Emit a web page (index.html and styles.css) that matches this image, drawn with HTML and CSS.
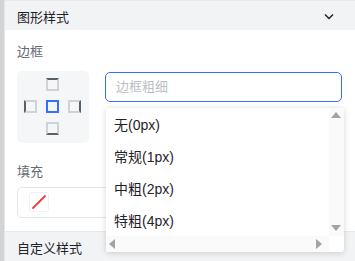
FILE: index.html
```html
<!DOCTYPE html>
<html lang="zh">
<head>
    <meta charset="UTF-8">
    <title>图形样式</title>
    <link rel="stylesheet" href="styles.css">
</head>
<body>
    <div class="strip"></div>
    <div class="panel">
        <div class="section-head">
            <span>图形样式</span>
            <svg class="chevron" width="10" height="7" viewBox="0 0 10 7"><path d="M1 1.5 L5 5.5 L9 1.5" fill="none" stroke="#1f2329" stroke-width="1.5"/></svg>
        </div>
        <div class="section-body">
            <div class="label">边框</div>
            <div class="border-row">
                <div class="picker">
                    <span></span><span class="sq top"></span><span></span>
                    <span class="sq left"></span><span class="sq center"></span><span class="sq right"></span>
                    <span></span><span class="sq bottom"></span><span></span>
                </div>
                <div class="input">边框粗细</div>
            </div>
            <div class="label fill-label">填充</div>
            <div class="fill-box">
                <div class="swatch">
                    <svg width="20" height="20" viewBox="0 0 20 20"><line x1="4" y1="16" x2="16" y2="4" stroke="#f03e3e" stroke-width="1.8" stroke-linecap="round"/></svg>
                </div>
            </div>
        </div>
        <div class="section-head bottom-head">
            <span>自定义样式</span>
            <svg class="chevron" width="10" height="7" viewBox="0 0 10 7"><path d="M1 1.5 L5 5.5 L9 1.5" fill="none" stroke="#1f2329" stroke-width="1.5"/></svg>
        </div>
    </div>

    <div class="dropdown">
        <div class="list">
            <div class="item">无(0px)</div>
            <div class="item">常规(1px)</div>
            <div class="item">中粗(2px)</div>
            <div class="item">特粗(4px)</div>
        </div>
        <div class="vscroll">
            <span class="arrow up"></span>
            <span class="arrow down"></span>
        </div>
        <div class="hscroll">
            <span class="arrow lt"></span>
            <span class="arrow rt"></span>
        </div>
    </div>
</body>
</html>
```

FILE: styles.css
```css
body{
    margin: 0;
    width: 355px;
    height: 261px;
    overflow: hidden;
    display: flex;
    font-family: "Liberation Sans", "Noto Sans CJK SC", sans-serif;
    background: #fff;
}
.strip{
    width: 4px;
    background: #d3d4d6;
    border-right: 1px solid #e6e7e9;
}
.panel{
    flex: 1;
    display: flex;
    flex-direction: column;
}
.section-head{
    height: 30px;
    box-sizing: border-box;
    background: #f2f3f5;
    border-top: 1px solid #e8e9eb;
    display: flex;
    align-items: center;
    justify-content: space-between;
    padding: 2px 21px 0 12px;
    font-size: 13px;
    color: #1f2329;
}
.section-body{
    padding: 0 13px 0 12px;
    height: 201px;
    box-sizing: border-box;
}
.label{
    font-size: 13px;
    color: #646a73;
    line-height: 18px;
    margin-top: 13px;
}
.border-row{
    display: flex;
    align-items: flex-start;
    gap: 16px;
    margin-top: 10px;
}
.picker{
    width: 72px;
    height: 72px;
    box-sizing: border-box;
    padding: 7px 8px 8px 7px;
    background: #f5f6f7;
    border-radius: 5px;
    display: grid;
    grid-template-columns: repeat(3, 13px);
    grid-template-rows: repeat(3, 13px);
    gap: 9px;
}
.sq{
    border: 2px solid #d0d3d6;
    box-sizing: border-box;
    width: 13px;
    height: 13px;
}
.sq.top{ border-top-color: #5c5f66; }
.sq.left{ border-left-color: #5c5f66; }
.sq.right{ border-right-color: #5c5f66; }
.sq.bottom{ border-bottom-color: #5c5f66; }
.sq.center{ border-color: #3370ff; }
.input{
    flex: 1;
    height: 30px;
    box-sizing: border-box;
    margin-top: 1px;
    border: 1px solid #3370ff;
    border-radius: 5px;
    padding: 0 10px;
    line-height: 28px;
    font-size: 13px;
    color: #bbbfc4;
}
.fill-label{
    margin-top: 20px;
}
.fill-box{
    margin-top: 6px;
    height: 31px;
    box-sizing: border-box;
    border: 1px solid #e4e5e7;
    border-radius: 5px;
    padding: 4px 11px;
}
.swatch{
    width: 20px;
    height: 20px;
    box-sizing: border-box;
    border: 1px solid #eef0f2;
    border-radius: 3px;
    display: flex;
}
.swatch svg{
    margin: -1px;
}
.bottom-head{
    flex: 1;
    align-items: center;
}

/* open dropdown list */
.dropdown{
    position: absolute;
    left: 106px;
    top: 108px;
    width: 238px;
    height: 144px;
    background: #fff;
    border-radius: 3px;
    box-shadow: 0 1px 6px rgba(0,0,0,0.16);
}
.list{
    padding-top: 1px;
}
.item{
    height: 32px;
    line-height: 32px;
    padding-left: 8px;
    font-size: 14px;
    color: #1f2329;
}
.vscroll{
    position: absolute;
    right: 0;
    top: 0;
    width: 15px;
    height: 128px;
    background: #fafafa;
}
.hscroll{
    position: absolute;
    left: 0;
    bottom: 0;
    width: 223px;
    height: 16px;
    background: #fafafa;
}
.arrow{
    position: absolute;
    width: 0;
    height: 0;
    border: 5px solid transparent;
}
.arrow.up{
    top: 4px;
    left: 2px;
    border-bottom-color: #a3a3a3;
    border-top-width: 0;
    border-bottom-width: 6px;
}
.arrow.down{
    bottom: 5px;
    left: 2px;
    border-top-color: #a3a3a3;
    border-bottom-width: 0;
    border-top-width: 6px;
}
.arrow.lt{
    left: 3px;
    top: 3px;
    border-right-color: #a3a3a3;
    border-left-width: 0;
    border-right-width: 6px;
}
.arrow.rt{
    right: 7px;
    top: 3px;
    border-left-color: #a3a3a3;
    border-right-width: 0;
    border-left-width: 6px;
}
```
